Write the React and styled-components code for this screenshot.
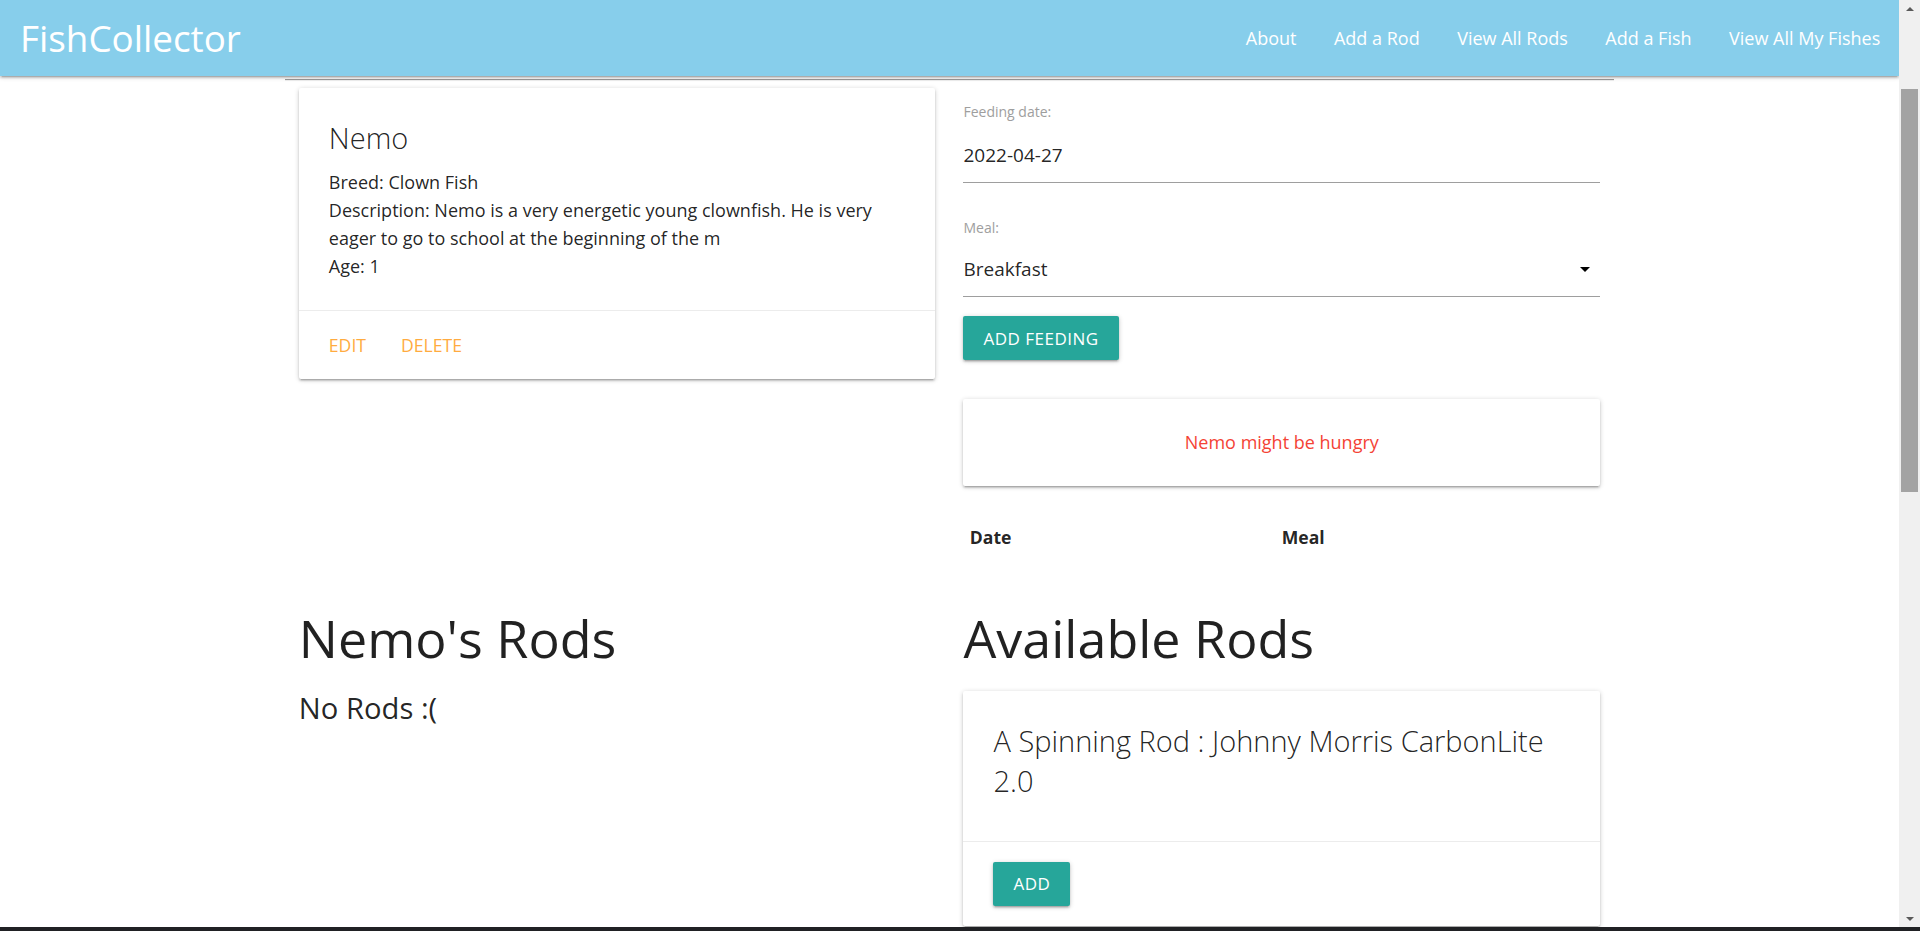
import React from "react";
import styled, { createGlobalStyle } from "styled-components";

const rods = ["A Spinning Rod : Johnny Morris CarbonLite 2.0"];

const navItems = ["About", "Add a Rod", "View All Rods", "Add a Fish", "View All My Fishes"];

const GlobalStyle = createGlobalStyle`
  * { box-sizing: border-box; }
  html, body { margin: 0; height: 100%; overflow: hidden; }
  body {
    font-family: "Open Sans", "Noto Sans", sans-serif;
    color: rgba(0, 0, 0, 0.87);
    background: #fff;
  }
  #root { height: 100%; }
`;

const shadow = `
  box-shadow: 0 2px 2px 0 rgba(0, 0, 0, 0.14), 0 3px 1px -2px rgba(0, 0, 0, 0.12),
    0 1px 5px 0 rgba(0, 0, 0, 0.2);
`;

const Screen = styled.div`
  height: 100vh;
  display: flex;
  flex-direction: column;
`;

const Window = styled.div`
  flex: 1;
  min-height: 0;
  display: flex;
`;

const Page = styled.div`
  flex: 1;
  min-width: 0;
  overflow: hidden;
`;

const ScrollRail = styled.div`
  width: 21px;
  flex-shrink: 0;
  display: flex;
  flex-direction: column;
  background: #f0f0f0;
`;

const ScrollArrow = styled.div`
  height: 17px;
  display: flex;
  align-items: center;
  justify-content: center;

  &::after {
    content: "";
    border-left: 4px solid transparent;
    border-right: 4px solid transparent;
    ${({ $down }) =>
      $down ? "border-top: 4px solid #5a5a5a;" : "border-bottom: 4px solid #5a5a5a;"}
  }
`;

const ScrollTrack = styled.div`
  flex: 1;
  padding: 72px 2px 0;
`;

const ScrollThumb = styled.div`
  height: 403px;
  background: #a3a3a3;
`;

const Taskbar = styled.div`
  height: 4px;
  flex-shrink: 0;
  background: #202124;
`;

const Nav = styled.nav`
  position: relative;
  z-index: 10;
  height: 76px;
  display: flex;
  align-items: center;
  justify-content: space-between;
  background: #87ceeb;
  ${shadow}
`;

const Logo = styled.a`
  padding-left: 20px;
  color: #fff;
  font-size: 36.8px;
  line-height: 76px;
  text-decoration: none;
`;

const NavList = styled.ul`
  display: flex;
  margin: 0;
  padding: 0;
  list-style: none;
`;

const NavLink = styled.a`
  display: block;
  padding: 0 18.75px;
  color: #fff;
  font-size: 18px;
  line-height: 76px;
  text-decoration: none;
`;

const Container = styled.main`
  width: 70%;
  margin: 0 auto;
`;

const Divider = styled.hr`
  margin: 3px 0 0;
  border: 0;
  border-top: 1px solid #9a9a9a;
  border-bottom: 1px solid #eeeeee;
`;

const Row = styled.div`
  display: grid;
  grid-template-columns: 1fr 1fr;
  column-gap: 28px;
  align-items: start;
  padding: 0 14px;
  margin-top: ${({ $top }) => $top}px;
`;

const Column = styled.div`
  min-width: 0;
`;

const Card = styled.div`
  background: #fff;
  border-radius: 2px;
  margin-top: ${({ $top }) => $top || 0}px;
  ${shadow}
`;

const CardContent = styled.div`
  padding: 30px;
  text-align: ${({ $center }) => ($center ? "center" : "left")};
`;

const CardTitle = styled.span`
  display: block;
  margin-bottom: 10px;
  font-size: 29px;
  font-weight: 300;
  line-height: 40px;
`;

const CardText = styled.p`
  margin: 0;
  font-size: 18px;
  line-height: ${({ $lh }) => $lh || 28}px;
  color: ${({ $color }) => $color || "inherit"};
`;

const CardAction = styled.div`
  display: flex;
  padding: 20px 30px;
  border-top: 1px solid rgba(160, 160, 160, 0.2);
`;

const ActionLink = styled.a`
  margin-right: 35px;
  color: #ffab40;
  font-size: 17.6px;
  line-height: 28px;
  text-transform: uppercase;
  cursor: pointer;
`;

const Field = styled.div`
  margin-top: ${({ $top }) => $top}px;
`;

const FieldLabel = styled.label`
  display: block;
  color: #9e9e9e;
  font-size: 14px;
  line-height: 15px;
`;

const TextInput = styled.input`
  display: block;
  width: 100%;
  height: 56px;
  margin-top: 8px;
  padding: 0;
  border: none;
  border-bottom: 1px solid #9e9e9e;
  background: transparent;
  outline: none;
  font-family: inherit;
  font-size: 19px;
  color: rgba(0, 0, 0, 0.87);
`;

const SelectBox = styled.div`
  display: flex;
  align-items: center;
  justify-content: space-between;
  height: 56px;
  margin-top: 6px;
  border-bottom: 1px solid #9e9e9e;
  font-size: 19px;
  cursor: pointer;

  svg {
    margin-right: 3px;
  }
`;

const Button = styled.button`
  height: 44px;
  margin-top: ${({ $top }) => $top || 0}px;
  padding: 0 20px;
  border: none;
  border-radius: 2px;
  background: #26a69a;
  color: #fff;
  font-family: inherit;
  font-size: 17px;
  letter-spacing: 0.5px;
  text-transform: uppercase;
  cursor: pointer;
  ${shadow}
`;

const Table = styled.table`
  width: 100%;
  margin-top: 18px;
  border-collapse: collapse;
`;

const Th = styled.th`
  width: ${({ $w }) => $w || "auto"};
  padding: 18.75px 6.25px;
  text-align: left;
  font-size: 17.6px;
  font-weight: 700;
  line-height: 28px;
`;

const SectionTitle = styled.h3`
  margin: 0 0 24px;
  font-size: 52px;
  font-weight: 400;
  line-height: 58px;
`;

const SubTitle = styled.h5`
  margin: 24.5px 0 0;
  font-size: 29.2px;
  font-weight: 400;
  line-height: 34px;
`;

const Caret = () => (
  <svg width="24" height="24" viewBox="0 0 24 24">
    <path d="M7 10l5 5 5-5z" fill="#000" />
  </svg>
);

const App = () => (
  <Screen>
    <GlobalStyle />
    <Window>
      <Page>
        <Nav>
          <Logo href="#">FishCollector</Logo>
          <NavList>
            {navItems.map((item) => (
              <li key={item}>
                <NavLink href="#">{item}</NavLink>
              </li>
            ))}
          </NavList>
        </Nav>

        <Container>
          <Divider />

          <Row $top={7}>
            <Column>
              <Card>
                <CardContent>
                  <CardTitle>Nemo</CardTitle>
                  <CardText>Breed: Clown Fish</CardText>
                  <CardText>
                    Description: Nemo is a very energetic young clownfish. He is very eager
                    to go to school at the beginning of the m
                  </CardText>
                  <CardText>Age: 1</CardText>
                </CardContent>
                <CardAction>
                  <ActionLink>Edit</ActionLink>
                  <ActionLink>Delete</ActionLink>
                </CardAction>
              </Card>
            </Column>

            <Column>
              <form onSubmit={(e) => e.preventDefault()}>
                <Field $top={16}>
                  <FieldLabel>Feeding date:</FieldLabel>
                  <TextInput type="text" defaultValue="2022-04-27" />
                </Field>
                <Field $top={37}>
                  <FieldLabel>Meal:</FieldLabel>
                  <SelectBox>
                    <span>Breakfast</span>
                    <Caret />
                  </SelectBox>
                </Field>
                <Button type="submit" $top={19}>
                  ADD FEEDING
                </Button>
              </form>

              <Card $top={39}>
                <CardContent $center>
                  <CardText $lh={27} $color="#f44336">
                    Nemo might be hungry
                  </CardText>
                </CardContent>
              </Card>

              <Table>
                <thead>
                  <tr>
                    <Th $w="312px">Date</Th>
                    <Th>Meal</Th>
                  </tr>
                </thead>
                <tbody />
              </Table>
            </Column>
          </Row>

          <Row $top={39}>
            <Column>
              <SectionTitle>Nemo's Rods</SectionTitle>
              <SubTitle>No Rods :(</SubTitle>
            </Column>

            <Column>
              <SectionTitle>Available Rods</SectionTitle>
              {rods.map((rod, i) => (
                <Card key={rod} $top={i === 0 ? 0 : 19}>
                  <CardContent>
                    <CardTitle>{rod}</CardTitle>
                  </CardContent>
                  <CardAction>
                    <Button type="button">ADD</Button>
                  </CardAction>
                </Card>
              ))}
            </Column>
          </Row>
        </Container>
      </Page>

      <ScrollRail>
        <ScrollArrow />
        <ScrollTrack>
          <ScrollThumb />
        </ScrollTrack>
        <ScrollArrow $down />
      </ScrollRail>
    </Window>
    <Taskbar />
  </Screen>
);

export default App;
